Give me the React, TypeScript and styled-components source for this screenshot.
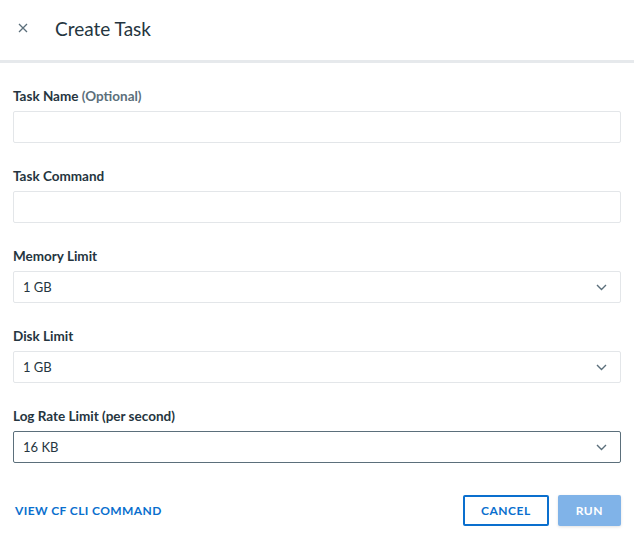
import React from 'react';
import styled, { createGlobalStyle } from 'styled-components';

const GlobalStyle = createGlobalStyle`
  html, body {
    margin: 0;
    padding: 0;
    background: #fff;
  }
  body {
    font-family: Lato, 'Open Sans', sans-serif;
    color: #253540;
  }
  * {
    box-sizing: border-box;
  }
`;

const Panel = styled.div`
  width: 634px;
  height: 543px;
  display: flex;
  flex-direction: column;
  background: #fff;
`;

const Header = styled.header`
  height: 63px;
  display: flex;
  align-items: center;
  border-bottom: 3px solid #e6e9ec;
  padding-left: 16px;
  padding-bottom: 4px;
`;

const CloseButton = styled.button`
  width: 14px;
  height: 14px;
  padding: 0;
  border: 0;
  background: none;
  display: flex;
  align-items: center;
  justify-content: center;
  color: #5b6f7b;
  cursor: pointer;
`;

const Title = styled.h1`
  margin: 0 0 0 25px;
  font-size: 19px;
  font-weight: 400;
  color: #253540;
`;

const Body = styled.div`
  display: flex;
  flex-direction: column;
  padding: 24px 13px 0 13px;
`;

const Field = styled.div`
  display: flex;
  flex-direction: column;
  margin-bottom: 24px;
`;

const Label = styled.label`
  font-size: 13.5px;
  font-weight: 700;
  line-height: 18px;
  color: #253540;
  margin-bottom: 6px;
`;

const Hint = styled.span`
  color: #5b6f7b;
`;

const Input = styled.input`
  height: 32px;
  width: 100%;
  border: 1px solid #e3e6e9;
  border-radius: 2px;
  padding: 0 9px;
  font-family: inherit;
  font-size: 13px;
  color: #253540;
  outline: none;
`;

const Select = styled.div<{ $focused?: boolean }>`
  height: 32px;
  width: 100%;
  border: 1px solid ${(p) => (p.$focused ? '#5b6f7b' : '#e3e6e9')};
  border-radius: 2px;
  padding: 0 13px 0 9px;
  display: flex;
  align-items: center;
  justify-content: space-between;
  font-size: 13px;
  color: #253540;
`;

const Footer = styled.div`
  display: flex;
  align-items: center;
  justify-content: space-between;
  padding: 8px 13px 0 15px;
`;

const LinkButton = styled.button`
  border: 0;
  background: none;
  padding: 0;
  font-family: inherit;
  font-size: 12px;
  font-weight: 700;
  letter-spacing: 0.4px;
  color: #0a6fce;
  cursor: pointer;
`;

const Actions = styled.div`
  display: flex;
  gap: 9px;
`;

const ActionButton = styled.button<{ $primary?: boolean }>`
  height: 31px;
  padding: 0 16px;
  border-radius: 2px;
  font-family: inherit;
  font-size: 12px;
  font-weight: 700;
  letter-spacing: 0.5px;
  cursor: pointer;
  border: 2px solid ${(p) => (p.$primary ? '#80b3e8' : '#0a6fce')};
  background: ${(p) => (p.$primary ? '#80b3e8' : '#fff')};
  color: ${(p) => (p.$primary ? '#fff' : '#0a6fce')};
  box-shadow: ${(p) => (p.$primary ? '0 1px 3px rgba(0,0,0,0.12)' : 'none')};
`;

const Chevron = () => (
  <svg width="11" height="7" viewBox="0 0 11 7" fill="none">
    <path d="M1 1l4.5 4.5L10 1" stroke="#5b6f7b" strokeWidth="1.4" />
  </svg>
);

const SelectField = ({ label, value, focused }: { label: string; value: string; focused?: boolean }) => (
  <Field>
    <Label>{label}</Label>
    <Select $focused={focused}>
      <span>{value}</span>
      <Chevron />
    </Select>
  </Field>
);

export default function App() {
  return (
    <>
      <GlobalStyle />
      <Panel>
        <Header>
          <CloseButton aria-label="Close">
            <svg width="10" height="10" viewBox="0 0 10 10">
              <path d="M1 1l8 8M9 1l-8 8" stroke="#5b6f7b" strokeWidth="1.3" />
            </svg>
          </CloseButton>
          <Title>Create Task</Title>
        </Header>
        <Body>
          <Field>
            <Label>
              Task Name <Hint>(Optional)</Hint>
            </Label>
            <Input />
          </Field>
          <Field>
            <Label>Task Command</Label>
            <Input />
          </Field>
          <SelectField label="Memory Limit" value="1 GB" />
          <SelectField label="Disk Limit" value="1 GB" />
          <SelectField label="Log Rate Limit (per second)" value="16 KB" focused />
        </Body>
        <Footer>
          <LinkButton>VIEW CF CLI COMMAND</LinkButton>
          <Actions>
            <ActionButton>CANCEL</ActionButton>
            <ActionButton $primary>RUN</ActionButton>
          </Actions>
        </Footer>
      </Panel>
    </>
  );
}
